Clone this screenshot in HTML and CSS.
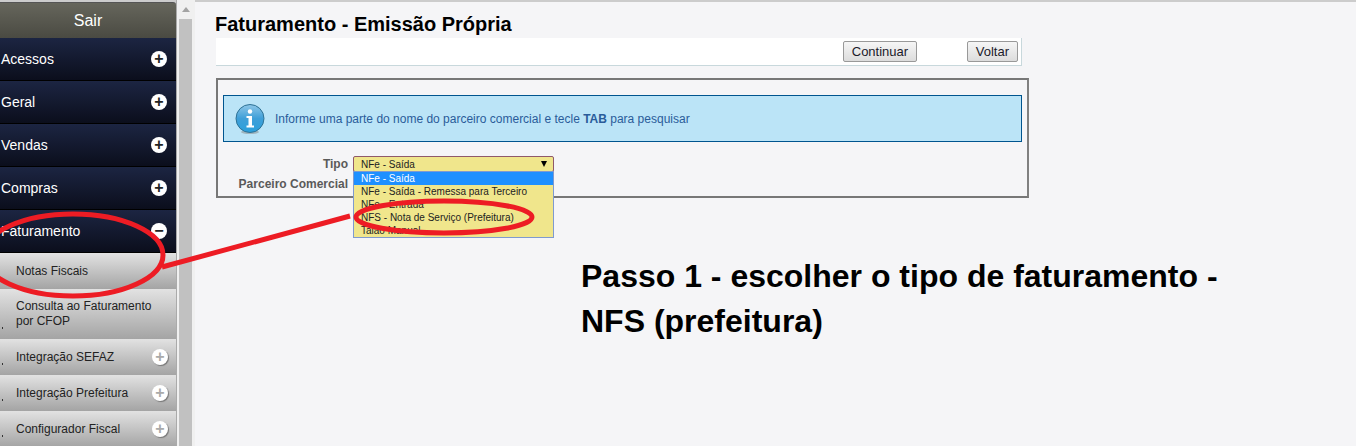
FILE: index.html
```html
<!DOCTYPE html>
<html lang="pt-BR">
<head>
  <meta charset="UTF-8">
  <title>Faturamento - Emissão Própria</title>
  <link rel="stylesheet" href="styles.css">
</head>
<body>
  <div class="page">
    <aside class="sidebar">
      <div class="logout">Sair</div>
      <div class="menu-item"><span>Acessos</span><span class="round-icon">+</span></div>
      <div class="menu-item"><span>Geral</span><span class="round-icon">+</span></div>
      <div class="menu-item"><span>Vendas</span><span class="round-icon">+</span></div>
      <div class="menu-item"><span>Compras</span><span class="round-icon">+</span></div>
      <div class="menu-item"><span>Faturamento</span><span class="round-icon">&minus;</span></div>
      <div class="sub-item"><span class="sub-label">Notas Fiscais</span></div>
      <div class="sub-item sub-tall"><i class="dot"></i><span class="sub-label">Consulta ao Faturamento<br>por CFOP</span></div>
      <div class="sub-item"><i class="dot"></i><span class="sub-label">Integração SEFAZ</span><span class="round-icon small">+</span></div>
      <div class="sub-item"><i class="dot"></i><span class="sub-label">Integração Prefeitura</span><span class="round-icon small">+</span></div>
      <div class="sub-item"><i class="dot"></i><span class="sub-label">Configurador Fiscal</span><span class="round-icon small">+</span></div>
    </aside>
    <div class="scrollbar">
      <div class="scroll-arrow"></div>
      <div class="scroll-thumb"></div>
    </div>
    <main class="content">
      <h1>Faturamento - Emissão Própria</h1>
      <div class="toolbar">
        <button class="btn btn-continue">Continuar</button>
        <button class="btn">Voltar</button>
      </div>
      <div class="form-box">
        <div class="info-bar">
          <svg class="info-icon" width="30" height="30" viewBox="0 0 30 30">
            <defs>
              <linearGradient id="infoFill" x1="0" y1="0" x2="0" y2="1">
                <stop offset="0" stop-color="#8fc7e8"/>
                <stop offset="0.5" stop-color="#3f9fd8"/>
                <stop offset="1" stop-color="#2aa0dc"/>
              </linearGradient>
            </defs>
            <ellipse cx="15" cy="28" rx="9" ry="2" fill="#9fb4be"/>
            <circle cx="15" cy="14.5" r="14" fill="url(#infoFill)" stroke="#2f7295"/>
            <circle cx="15" cy="7.5" r="2.2" fill="#fff"/>
            <path d="M11.5 12h5.500v9.500h2v2h-7.500v-2h2v-7.500h-2z" fill="#fff"/>
          </svg>
          <span>Informe uma parte do nome do parceiro comercial e tecle <b>TAB</b> para pesquisar</span>
        </div>
        <div class="form-row">
          <label class="form-label">Tipo</label>
          <div class="select-wrap">
            <div class="select-box"><span>NFe - Saída</span><span class="select-arrow"></span></div>
            <ul class="select-list">
              <li class="selected">NFe - Saída</li>
              <li>NFe - Saída - Remessa para Terceiro</li>
              <li>NFe - Entrada</li>
              <li>NFS - Nota de Serviço (Prefeitura)</li>
              <li>Talão Manual</li>
            </ul>
          </div>
        </div>
        <div class="form-row">
          <label class="form-label">Parceiro Comercial</label>
        </div>
      </div>
      <p class="step-note">Passo 1 - escolher o tipo de faturamento -<br>NFS (prefeitura)</p>
    </main>
    <svg class="marks" width="1356" height="446" viewBox="0 0 1356 446">
      <ellipse cx="73" cy="255" rx="90" ry="41" />
      <path d="M162 267 L350 216" />
      <ellipse cx="444" cy="217" rx="88" ry="16" />
    </svg>
  </div>
</body>
</html>
```

FILE: styles.css
```css
* {
  box-sizing: border-box;
}
body {
  margin: 0;
  font-family: "Liberation Sans", Arial, sans-serif;
  background-color: #f5f5f7;
}
.page {
  position: relative;
  display: flex;
  width: 1356px;
  height: 446px;
  overflow: hidden;
  background-color: #f0f0f0;
}

/* left menu */
.sidebar {
  width: 177px;
  flex: none;
  padding-top: 2px;
  background-color: #ccc;
  border-right: 1px solid #aaa;
}
.logout {
  height: 36px;
  line-height: 35px;
  text-align: center;
  font-size: 16px;
  color: #fff;
  background: linear-gradient(#66665c, #4a4a42);
  border-top: 1px solid #555;
  border-top-right-radius: 3px;
}
.menu-item {
  display: flex;
  align-items: center;
  justify-content: space-between;
  height: 43px;
  padding: 0 9px 0 1px;
  font-size: 14px;
  color: #fff;
  background: linear-gradient(#1c2542, #0b0e1c);
  border-bottom: 1px solid #000;
}
.round-icon {
  display: flex;
  align-items: center;
  justify-content: center;
  width: 16px;
  height: 16px;
  border-radius: 50%;
  background-color: #fff;
  color: #222;
  font-size: 16px;
  font-weight: bold;
  line-height: 16px;
}
.round-icon.small {
  margin-right: 8px;
  color: #aaa;
  box-shadow: 1px 1px 1px #777;
}
.sub-item {
  position: relative;
  display: flex;
  align-items: center;
  justify-content: space-between;
  height: 36px;
  padding-left: 16px;
  font-size: 12px;
  color: #222;
  background: linear-gradient(#e2e2e2, #a4a4a4);
}
.sub-tall {
  height: 50px;
}
.sub-label {
  line-height: 15px;
}
.dot {
  position: absolute;
  left: 2px;
  bottom: 10px;
  width: 1px;
  height: 2px;
  background-color: #333;
}

/* fake scrollbar of the frame */
.scrollbar {
  width: 18px;
  flex: none;
  padding: 2px 3px 0 2px;
  border-right: 0;
}
.scroll-arrow {
  width: 0;
  margin: 5px auto 7px;
  border: 4px solid transparent;
  border-top: 0;
  border-bottom: 5px solid #a3a3a3;
}
.scroll-thumb {
  height: 430px;
  background-color: #c1c1c1;
}

/* main area */
.content {
  flex: 1;
  margin-top: 2px;
  padding: 10px 0 0 20px;
  background-color: #f5f5f7;
  border-top: 0;
  box-shadow: 0 -2px 0 #ccc;
}
h1 {
  margin: 0;
  font-size: 20px;
  line-height: 24px;
  color: #000;
}
.toolbar {
  display: flex;
  justify-content: flex-end;
  gap: 50px;
  width: 806px;
  height: 28px;
  margin: 2px 0 0 1px;
  padding: 3px 3px 0 0;
  background-color: #fff;
  border-right: 1px solid #c8d8dc;
  border-bottom: 1px solid #c8d8dc;
}
.btn {
  height: 21px;
  padding: 0 8px;
  font-family: inherit;
  font-size: 13px;
  color: #1a1a2a;
  background: linear-gradient(#f6f6f6, #dcdcdc);
  border: 1px solid #999;
  border-radius: 2px;
}
.btn-continue {
  width: 74px;
}
.form-box {
  width: 813px;
  height: 120px;
  margin: 12px 0 0 1px;
  padding: 15px 5px 0;
  border: 2px solid #777;
  border-right-color: #808080;
}
.info-bar {
  display: flex;
  align-items: center;
  gap: 10px;
  height: 47px;
  padding-left: 11px;
  font-size: 12px;
  color: #2a5c9a;
  background-color: #bbe4f7;
  border: 1px solid #00558f;
}
.info-icon {
  flex: none;
}
.form-row {
  display: flex;
  align-items: center;
  height: 20px;
  font-size: 12px;
}
.form-row:nth-child(2) {
  margin-top: 12px;
}
.form-label {
  width: 125px;
  text-align: right;
  font-weight: bold;
  color: #5a5a5a;
}
.select-wrap {
  position: relative;
  width: 201px;
  margin-left: 5px;
  font-size: 10px;
  color: #222;
}
.select-box {
  display: flex;
  align-items: center;
  justify-content: space-between;
  height: 16px;
  padding: 0 6px 0 7px;
  background-color: #f0e68c;
  border: 1px solid #8f5a6a;
  border-radius: 2px;
}
.select-arrow {
  width: 0;
  border: 3.500px solid transparent;
  border-top: 6px solid #000;
  border-bottom: 0;
}
.select-list {
  position: absolute;
  top: 15px;
  left: 0;
  width: 100%;
  height: 67px;
  margin: 0;
  padding: 0;
  list-style: none;
  background-color: #f0e68c;
  border: 1px solid #7f9ad0;
}
.select-list li {
  height: 13px;
  padding-left: 7px;
  line-height: 13px;
}
.select-list .selected {
  color: #fff;
  background-color: #1e90ff;
}
.step-note {
  margin: 56px 0 0 366px;
  font-size: 32px;
  font-weight: bold;
  line-height: 45px;
  color: #000;
}

/* red hand-drawn marks on top of the screenshot */
.marks {
  position: absolute;
  top: 0;
  left: 0;
  pointer-events: none;
}
.marks ellipse,
.marks path {
  fill: none;
  stroke: #ed1c24;
  stroke-width: 5;
}
```
